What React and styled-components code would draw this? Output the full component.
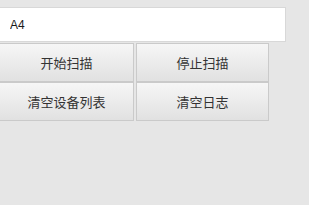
import styled, { createGlobalStyle } from "styled-components";

const Global = createGlobalStyle`
body{
margin:0;
background:#e6e6e6;
font-family:"Noto Sans CJK SC","Noto Sans",sans-serif;
}
`;
const Page = styled.div`
padding-top:7px;
`;
const Field = styled.input`
display:block;
box-sizing:border-box;
width:286px;
height:35px;
margin:0;
padding:0 0 0 10px;
border:1px solid #d8d8d8;
border-left:none;
background:#fff;
font-family:"Liberation Sans","Noto Sans",sans-serif;
font-size:12px;
color:#1a1a1a;
outline:none;
`;
const Grid = styled.div`
display:grid;
grid-template-columns:134px 133px;
grid-auto-rows:39px;
column-gap:2px;
margin-top:1px;
width:269px;
`;
const Btn = styled.button`
box-sizing:border-box;
margin:0;
border:1px solid #cacaca;
border-left:${p => (p.$first ? "none" : "1px solid #cacaca")};
background:linear-gradient(#f6f6f6, #e1e1e1);
font-family:"Noto Sans CJK SC",sans-serif;
font-size:13px;
color:#333;
padding:0;
`;

export default function App() {
    return (
        <Page>
            <Global />
            <Field defaultValue="A4" />
            <Grid>
                <Btn $first>开始扫描</Btn>
                <Btn>停止扫描</Btn>
                <Btn $first>清空设备列表</Btn>
                <Btn>清空日志</Btn>
            </Grid>
        </Page>
    );
}
